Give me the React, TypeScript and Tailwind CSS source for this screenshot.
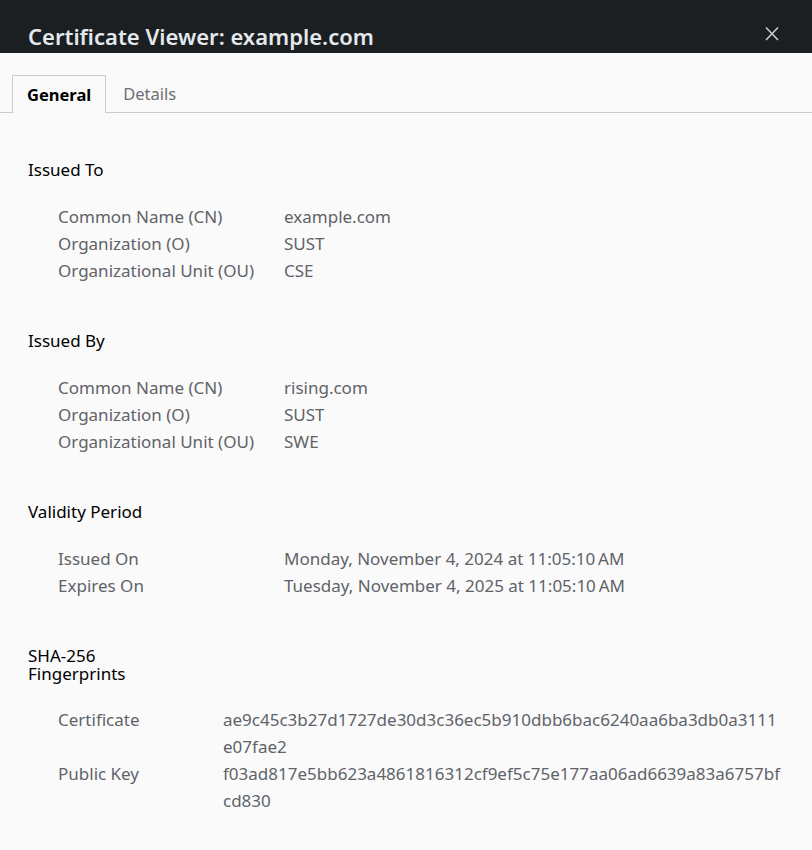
import React, { useState } from 'react';

type Row = { label: string; value: string[] };

const sections: { title: string; rows: Row[] }[] = [
  {
    title: 'Issued To',
    rows: [
      { label: 'Common Name (CN)', value: ['example.com'] },
      { label: 'Organization (O)', value: ['SUST'] },
      { label: 'Organizational Unit (OU)', value: ['CSE'] },
    ],
  },
  {
    title: 'Issued By',
    rows: [
      { label: 'Common Name (CN)', value: ['rising.com'] },
      { label: 'Organization (O)', value: ['SUST'] },
      { label: 'Organizational Unit (OU)', value: ['SWE'] },
    ],
  },
  {
    title: 'Validity Period',
    rows: [
      { label: 'Issued On', value: ['Monday, November 4, 2024 at 11:05:10\u202fAM'] },
      { label: 'Expires On', value: ['Tuesday, November 4, 2025 at 11:05:10\u202fAM'] },
    ],
  },
];

const fingerprints: Row[] = [
  { label: 'Certificate', value: ['ae9c45c3b27d1727de30d3c36ec5b910dbb6bac6240aa6ba3db0a3111', 'e07fae2'] },
  { label: 'Public Key', value: ['f03ad817e5bb623a4861816312cf9ef5c75e177aa06ad6639a83a6757bf', 'cd830'] },
];

const CloseIcon = () => (
  <svg width="16" height="16" viewBox="0 0 16 16" fill="none" stroke="currentColor" strokeWidth="1.6">
    <path d="M2 1.5 L14 14 M14 1.5 L2 14" />
  </svg>
);

export default function App() {
  const [tab, setTab] = useState<'general' | 'details'>('general');

  return (
    <div className="w-[812px] h-[850px] bg-[#fafafa] font-['Noto_Sans',sans-serif] text-[17px] overflow-hidden">
      {/* title bar */}
      <div className="h-[53px] bg-[#1b1f22] flex items-end justify-between pl-[28px] pr-[32px] pb-[2px]">
        <h1 className="text-[22px] font-semibold text-[#e3e8ec] leading-[30px]">Certificate Viewer: example.com</h1>
        <button className="text-[#c8ccd0] mb-[9px]">
          <CloseIcon />
        </button>
      </div>

      {/* tabs */}
      <div className="flex pl-[12px] mt-[22px] border-b border-[#cccccc] h-[38px] text-[16.5px]">
        <button
          onClick={() => setTab('general')}
          className={`px-[14px] h-[38px] leading-[38px] ${tab === 'general' ? 'font-bold text-black border border-b-0 border-[#cccccc] bg-[#fafafa] -mb-px' : 'text-[#6b6f73]'}`}
        >
          General
        </button>
        <button
          onClick={() => setTab('details')}
          className={`px-[17px] h-[38px] leading-[38px] ${tab === 'details' ? 'font-bold text-black border border-b-0 border-[#cccccc] bg-[#fafafa] -mb-px' : 'text-[#6b6f73]'}`}
        >
          Details
        </button>
      </div>

      <div className="pl-[28px] pr-[20px] pt-[45px]">
        {sections.map((s) => (
          <div key={s.title} className="mb-[45px]">
            <div className="text-black leading-[24px] mb-[21px]">{s.title}</div>
            <div className="pl-[30px]">
              {s.rows.map((r) => (
                <div key={r.label} className="flex leading-[27px] text-[#5f6368]">
                  <div className="w-[226px] shrink-0">{r.label}</div>
                  <div className="whitespace-nowrap">{r.value[0]}</div>
                </div>
              ))}
            </div>
          </div>
        ))}

        <div className="mt-[48px]">
          <div className="text-black leading-[18px] w-[110px] mb-[23px]">SHA-256 Fingerprints</div>
          <div className="pl-[30px]">
            {fingerprints.map((r) => (
              <div key={r.label} className="flex leading-[27px] text-[#5f6368]">
                <div className="w-[165px] shrink-0">{r.label}</div>
                <div className="whitespace-nowrap">
                  {r.value.map((v) => (
                    <div key={v}>{v}</div>
                  ))}
                </div>
              </div>
            ))}
          </div>
        </div>
      </div>
    </div>
  );
}
